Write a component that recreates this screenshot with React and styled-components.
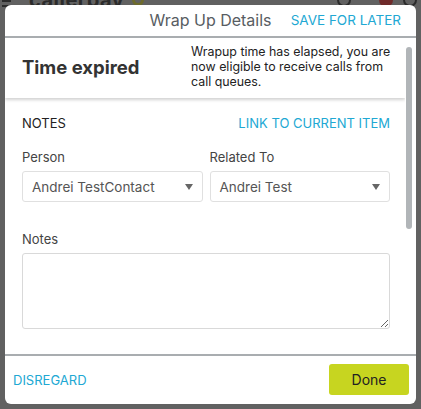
import React from 'react';
import styled, { createGlobalStyle } from 'styled-components';

const GlobalStyle = createGlobalStyle`
  html, body {
    margin: 0;
    height: 100%;
    background: #616161;
    font-family: Inter, "Noto Sans", Arial, sans-serif;
  }
  #root { height: 100%; }
  * { box-sizing: border-box; }
`;

const Screen = styled.div`
  position: relative;
  height: 100vh;
  overflow: hidden;
`;

const AppBar = styled.div`
  display: flex;
  align-items: center;
  height: 20px;
  margin-top: -10px;
  padding: 0 4px 0 2px;
  color: #2b2b2b;
`;

const Burger = styled.div`
  width: 9px;
  height: 2px;
  background: #2b2b2b;
  box-shadow: 0 5px 0 #2b2b2b;
  margin-top: 2px;
`;

const Brand = styled.span`
  margin-left: 18px;
  font-size: 20px;
  font-weight: 700;
  letter-spacing: 0.5px;
`;

const BrandMark = styled.span`
  margin-left: 8px;
  width: 12px;
  height: 12px;
  border: 3px solid #6d6a2c;
  border-radius: 50%;
`;

const BarSpacer = styled.div`
  flex: 1;
`;

const BarIcon = styled.span`
  width: 14px;
  height: 14px;
  border-radius: 50%;
  margin-left: ${(p) => p.gap || 0}px;
  border: ${(p) => (p.filled ? 'none' : '2px solid #2b2b2b')};
  background: ${(p) => (p.filled ? '#6e2a2a' : 'transparent')};
`;

const Modal = styled.div`
  position: absolute;
  top: 5px;
  left: 5px;
  right: 5px;
  bottom: 5px;
  background: #fff;
  border-radius: 6px;
  display: flex;
  flex-direction: column;
  overflow: hidden;
`;

const Header = styled.div`
  display: grid;
  grid-template-columns: 1fr auto 1fr;
  align-items: center;
  height: 33px;
  border-bottom: 2px solid #a9adb0;
  padding-bottom: 1px;
`;

const Title = styled.div`
  font-size: 16px;
  color: #585d62;
`;

const LinkButton = styled.button`
  justify-self: ${(p) => p.align || 'start'};
  border: none;
  background: none;
  padding: 0;
  margin-right: ${(p) => p.mr || 0}px;
  font-family: inherit;
  font-size: ${(p) => p.size || 13}px;
  color: #21a8d3;
  cursor: pointer;
  text-transform: uppercase;
`;

const Body = styled.div`
  flex: 1;
  display: flex;
  min-height: 0;
`;

const Scroller = styled.div`
  flex: 1;
  overflow: hidden;
`;

const ScrollRail = styled.div`
  width: 11px;
  padding: 9px 4px 0 1px;
`;

const Thumb = styled.div`
  height: 182px;
  border-radius: 3px;
  background: #b1b5b8;
`;

const Banner = styled.div`
  display: grid;
  grid-template-columns: 169px 1fr;
  align-items: center;
  height: 60px;
  padding: 0 14px 0 17px;
  box-shadow: 0 2px 3px rgba(0, 0, 0, 0.18);
`;

const Expired = styled.div`
  font-size: 18.5px;
  font-weight: 700;
  color: #333;
  margin-top: -3px;
`;

const BannerText = styled.div`
  font-size: 12.4px;
  line-height: 15px;
  color: #222;
  margin-top: -4px;
`;

const Section = styled.div`
  padding: 17px 15px 0 17px;
`;

const SectionHead = styled.div`
  display: flex;
  justify-content: space-between;
  align-items: center;
  height: 16px;
`;

const SectionTitle = styled.div`
  font-size: 13px;
  color: #222;
`;

const Row = styled.div`
  display: grid;
  grid-template-columns: 1fr 1fr;
  gap: 7px;
  margin-top: 18px;
`;

const Field = styled.div`
  display: flex;
  flex-direction: column;
  margin-top: ${(p) => p.mt || 0}px;
`;

const Label = styled.label`
  font-size: 13px;
  color: #444;
  line-height: 16px;
  margin-bottom: 6px;
`;

const Select = styled.div`
  display: flex;
  align-items: center;
  justify-content: space-between;
  height: 31px;
  padding: 0 9px 0 9px;
  border: 1px solid #e0e0e0;
  border-radius: 3px;
  font-size: 13.5px;
  color: #555;
`;

const Caret = styled.span`
  width: 0;
  height: 0;
  border-left: 4px solid transparent;
  border-right: 4px solid transparent;
  border-top: 6px solid #666;
`;

const TextArea = styled.textarea`
  height: 76px;
  border: 1px solid #d9d9d9;
  border-radius: 3px;
  resize: vertical;
  font-family: inherit;
  font-size: 13px;
  padding: 6px 9px;
  outline: none;
`;

const Footer = styled.div`
  display: flex;
  justify-content: space-between;
  align-items: center;
  height: 50px;
  border-top: 2px solid #a9adb0;
  padding: 0 7px 1px 8px;
`;

const DoneButton = styled.button`
  width: 80px;
  height: 31px;
  border: none;
  border-radius: 3px;
  background: #c7d520;
  font-family: inherit;
  font-size: 14px;
  color: #222;
  cursor: pointer;
`;

export default function App() {
  return (
    <Screen>
      <GlobalStyle />
      <AppBar>
        <Burger />
        <Brand>callerbay</Brand>
        <BrandMark />
        <BarSpacer />
        <BarIcon gap={0} />
        <BarIcon filled gap={28} />
        <BarIcon gap={10} />
      </AppBar>
      <Modal>
        <Header>
          <span />
          <Title>Wrap Up Details</Title>
          <LinkButton align="end" mr={15} size={13.5}>Save for later</LinkButton>
        </Header>
        <Body>
          <Scroller>
            <Banner>
              <Expired>Time expired</Expired>
              <BannerText>
                Wrapup time has elapsed, you are now eligible to receive calls from call queues.
              </BannerText>
            </Banner>
            <Section>
              <SectionHead>
                <SectionTitle>NOTES</SectionTitle>
                <LinkButton size={13}>Link to current item</LinkButton>
              </SectionHead>
              <Row>
                <Field>
                  <Label>Person</Label>
                  <Select>
                    Andrei TestContact
                    <Caret />
                  </Select>
                </Field>
                <Field>
                  <Label>Related To</Label>
                  <Select>
                    Andrei Test
                    <Caret />
                  </Select>
                </Field>
              </Row>
              <Field mt={29}>
                <Label>Notes</Label>
                <TextArea />
              </Field>
            </Section>
          </Scroller>
          <ScrollRail>
            <Thumb />
          </ScrollRail>
        </Body>
        <Footer>
          <LinkButton size={13}>Disregard</LinkButton>
          <DoneButton>Done</DoneButton>
        </Footer>
      </Modal>
    </Screen>
  );
}
